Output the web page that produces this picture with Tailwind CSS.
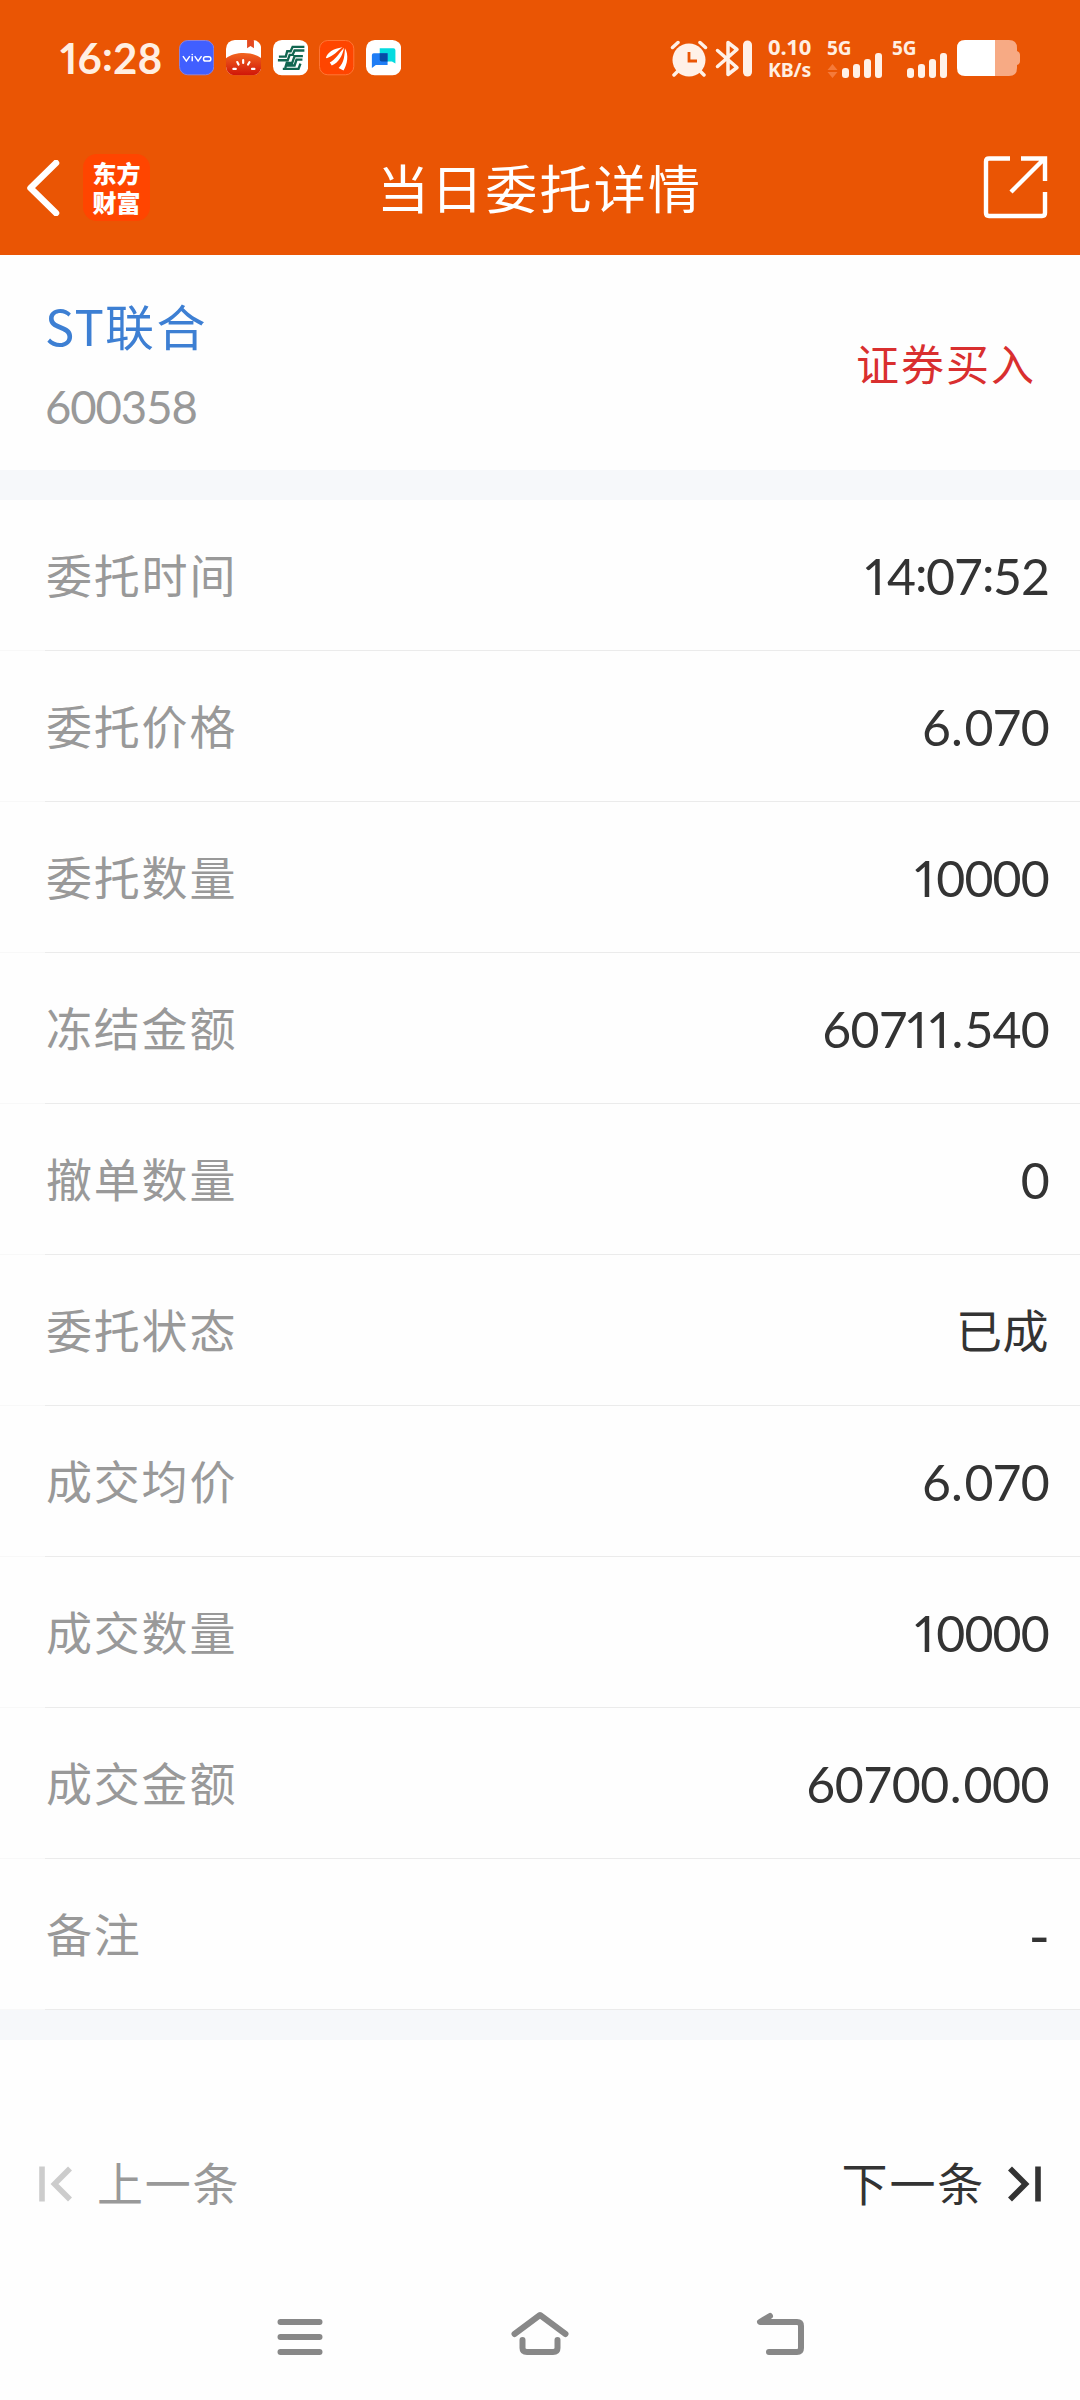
<!DOCTYPE html>
<html lang="zh-CN">
<head>
<meta charset="utf-8">
<title>当日委托详情</title>
<script src="https://cdn.jsdelivr.net/npm/@tailwindcss/browser@4"></script>
</head>
<body class="w-[1080px] h-[2400px] overflow-hidden bg-[#fefefe] flex flex-col font-['Lato','Noto_Sans_CJK_SC',sans-serif] text-[#333333]">
<header class="h-[255px] shrink-0 bg-[#ea5504] flex flex-col">
  <!-- status bar -->
  <div class="h-[116px] flex items-center justify-between pl-[60px] pr-[60px]">
    <div class="flex items-center text-[#ffefe2]">
      <span class="w-[119px] text-[42px] leading-[44px] font-bold tracking-[0.200px] tabular-nums whitespace-nowrap"><span class="proportional-nums">1</span>6<span class="relative -top-[3px]">:</span>28</span>
      <div class="flex gap-[11.5px]">
        <svg class="size-[35.3px]" viewBox="0 0 36 36"><rect x=".5" y=".5" width="35" height="35" rx="8.5" fill="#415fff" stroke="#8c83dc"/><g fill="none" stroke="#fff" stroke-width="1.5"><path d="M4 16.500l3.500 5 3.500-5M13.500 16.500v5.200M16 16.500l3.500 5 3.500-5"/><rect x="25" y="17" width="7.500" height="4.500" rx="2.200"/></g><circle cx="13.500" cy="14.800" r=".8" fill="#fff"/></svg>
        <svg class="size-[35.3px]" viewBox="0 0 36 36"><defs><clipPath id="tc"><rect width="36" height="36" rx="9"/></clipPath><linearGradient id="tg" x2="0" y2="1"><stop stop-color="#f2651f"/><stop offset="1" stop-color="#cf1408"/></linearGradient></defs><g clip-path="url(#tc)"><rect width="36" height="36" fill="#fff"/><path d="M21.500 0h7v8.500L25 6l-3.500 2.500z" fill="#e4491f"/><path d="M0 18.500C9 11.500 27 11.500 36 18.500v18H0z" fill="url(#tg)"/><g stroke="#fff" stroke-width="2.200" stroke-linecap="round"><path d="M17.500 20.500v3M11.500 22.500l1.300 2.500M24 22.500l-1.500 2.500M7.500 29.500h2.500M26.500 29.500h2.500"/></g></g></svg>
        <svg class="size-[35.3px]" viewBox="0 0 36 36"><rect width="36" height="36" rx="9" fill="#fff"/><g fill="none" stroke="#116650" stroke-width="2.400"><path d="M32 7H20l-2 4.500h-3.500L13 17H6M32 10.700H22l-2 4.500h-3l-2 5.500H5M30.500 16.500H22l-2.500 7H14l-1.500 5M30 20h-6l-2 6h-8M28 24l-2 5.500H10"/></g></svg>
        <svg class="size-[35.3px]" viewBox="0 0 36 36"><rect x=".5" y=".5" width="35" height="35" rx="8.500" fill="#ff4500" stroke="#ff7636"/><g fill="#fff"><path d="M7 18C9 13 14 9 24 7.500C18 11.500 16 16 8 18.500z"/><path d="M11 23C17 20 20 14 25.500 8C24 16 20 23.500 13 26z"/><path d="M20 28.500C26 23 26 15 26.500 8.500C30.500 15 29 25 25 31z"/></g></svg>
        <svg class="size-[35.3px]" viewBox="0 0 36 36"><rect width="36" height="36" rx="9" fill="#fff"/><path d="M14 8.500h14q2 0 2 2V24l-3.500-2H14z" fill="#05dbe0"/><path d="M8 13.500h14v12H10L6 28.500V15.500q0-2 2-2z" fill="#1f7df5"/><path d="M14 13.500h8V22h-6q-2 0-2-2z" fill="#064aa5"/></svg>
      </div>
    </div>
    <div class="flex items-center text-[#ffefe2]">
      <svg class="w-[38px] h-[37px]" viewBox="0 0 38 37"><circle cx="19" cy="20" r="16.500" fill="#fff1e8"/><path d="M19 12v9h8" fill="none" stroke="#ea5504" stroke-width="2.800"/><path d="M2.500 7.500l5.500-5M35.500 7.500L30 2.500M8 31l-4 4M30 31l4 4" stroke="#fff1e8" stroke-width="3.500" stroke-linecap="round"/></svg>
      <svg class="ml-[7px] w-[38px] h-[37px]" viewBox="0 0 38 37"><path d="M2.500 10.500L22 27.500l-9 7V2.500l9 7L2.500 26.500" fill="none" stroke="#fff1e8" stroke-width="3.500" stroke-linejoin="round" stroke-linecap="round"/><rect x="28" y=".5" width="9" height="36" rx="4.500" fill="#fff1e8"/></svg>
      <div class="ml-[15px] w-[49px] font-['Noto_Sans',sans-serif] font-bold leading-[23px] whitespace-nowrap flex flex-col"><span class="text-[22px] tracking-[-0.200px]">0.10</span><span class="text-[19.500px] tracking-[-0.200px]">KB/s</span></div>
      <div class="ml-[10px] w-[57px] h-[40px] flex flex-col justify-between font-['Noto_Sans',sans-serif] font-bold">
        <span class="text-[19px] leading-[20px] h-[12px]">5G</span>
        <svg class="w-[57px] h-[26px]" viewBox="0 0 57 26"><path d="M5.500 12l5 6H.5zM5.500 26l5-6H.5z" fill="#f57a3a"/><g fill="#fff1e8"><rect x="15" y="16" width="7" height="10" rx="3"/><rect x="26" y="12" width="7" height="14" rx="3"/><rect x="37" y="7" width="7" height="19" rx="3"/><rect x="48" y="1" width="7" height="25" rx="3"/></g></svg>
      </div>
      <div class="ml-[8px] w-[57px] h-[40px] flex flex-col justify-between font-['Noto_Sans',sans-serif] font-bold">
        <span class="text-[19px] leading-[20px] h-[12px]">5G</span>
        <svg class="w-[57px] h-[26px]" viewBox="0 0 57 26"><g fill="#fff1e8"><rect x="15" y="16" width="7" height="10" rx="3"/><rect x="26" y="12" width="7" height="14" rx="3"/><rect x="37" y="7" width="7" height="19" rx="3"/><rect x="48" y="1" width="7" height="25" rx="3"/></g></svg>
      </div>
      <svg class="ml-[8px] w-[63px] h-[36px]" viewBox="0 0 63 36"><path d="M38 0h14q8 0 8 8v3q3 1 3 4v6q0 3-3 4v3q0 8-8 8H38z" fill="#f7aa84"/><path d="M8 0h30v36H8q-8 0-8-8V8q0-8 8-8z" fill="#fff"/></svg>
    </div>
  </div>
  <!-- title bar -->
  <div class="h-[139px] grid grid-cols-[1fr_auto_1fr] items-center pl-[26px] pr-[31px]">
    <div class="flex items-center mt-[4px]">
      <svg class="w-[34px] h-[56px]" viewBox="0 0 34 56"><path d="M30 3L4.500 28 30 53" fill="none" stroke="#fff" stroke-width="6.500" stroke-linejoin="round" stroke-linecap="round"/></svg>
      <div class="ml-[23px] size-[67px] rounded-[14px] bg-[#ff4500] text-white font-black text-[24px] leading-[29px] font-['Noto_Sans_CJK_SC',sans-serif] flex flex-col items-center justify-center"><span class="-mt-[2px]">东方</span><span>财富</span></div>
    </div>
    <h1 class="mt-[3px] ml-[4px] text-white text-[52px] leading-[60px] tracking-[2.200px] font-['Noto_Sans_CJK_SC',sans-serif] whitespace-nowrap">当日委托详情</h1>
    <svg class="justify-self-end mt-[4px] w-[66px] h-[66px]" viewBox="0 0 66 66"><path d="M27 3.500H6q-3 0-3 3V58q0 3 3 3h53q3 0 3-3V37M38 3.500h24V26M61 4L28 37" fill="none" stroke="#fff" stroke-width="4.400"/></svg>
  </div>
</header>

<section class="h-[215px] shrink-0 flex justify-between pl-[45px] pr-[44px]">
  <div class="flex flex-col pt-[38px]">
    <span class="text-[49px] leading-[64px] tracking-[2.300px] text-[#3d7fd3] whitespace-nowrap font-['Noto_Sans_CJK_SC',sans-serif]"><span class="tracking-[1.300px]">ST</span>联合</span>
    <span class="mt-[20px] text-[45.500px] leading-[60px] tracking-[-1.100px] tabular-nums text-[#999999]">600358</span>
  </div>
  <span class="pt-[77px] text-[43px] leading-[60px] tracking-[2px] text-[#d92f2f] font-['Noto_Sans_CJK_SC',sans-serif] whitespace-nowrap">证券买入</span>
</section>
<div class="h-[30px] shrink-0 bg-[#f6f8fa]"></div>

<dl class="shrink-0 text-[46px] leading-[60px]">
  <div class="flex"><div class="w-[45px] border-b border-[#f8f8f8]"></div><div class="flex-1 h-[151px] border-b border-[#ebebeb] flex items-center justify-between pt-[2px] pl-px pr-[31px]"><dt class="text-[#999999] tracking-[1.800px]">委托时间</dt><dd class="text-[50px] tracking-[-1px] tabular-nums"><span class="proportional-nums tracking-[2px]">1</span>4<span class="relative -top-[3px] tracking-[-1.500px]">:</span>07<span class="relative -top-[3px] tracking-[-1.500px]">:</span>52</dd></div></div>
  <div class="flex"><div class="w-[45px] border-b border-[#f8f8f8]"></div><div class="flex-1 h-[151px] border-b border-[#ebebeb] flex items-center justify-between pt-[2px] pl-px pr-[31px]"><dt class="text-[#999999] tracking-[1.800px]">委托价格</dt><dd class="text-[50px] tracking-[-0.800px] tabular-nums">6<span class="ml-px tracking-[1.500px]">.</span>070</dd></div></div>
  <div class="flex"><div class="w-[45px] border-b border-[#f8f8f8]"></div><div class="flex-1 h-[151px] border-b border-[#ebebeb] flex items-center justify-between pt-[2px] pl-px pr-[31px]"><dt class="text-[#999999] tracking-[1.800px]">委托数量</dt><dd class="text-[50px] tracking-[-0.800px] tabular-nums"><span class="proportional-nums tracking-[2px]">1</span>0000</dd></div></div>
  <div class="flex"><div class="w-[45px] border-b border-[#f8f8f8]"></div><div class="flex-1 h-[151px] border-b border-[#ebebeb] flex items-center justify-between pt-[2px] pl-px pr-[31px]"><dt class="text-[#999999] tracking-[1.800px]">冻结金额</dt><dd class="text-[50px] tracking-[-0.800px] tabular-nums">607<span class="proportional-nums tracking-[2.500px]">11</span><span class="tracking-[1px]">.</span>540</dd></div></div>
  <div class="flex"><div class="w-[45px] border-b border-[#f8f8f8]"></div><div class="flex-1 h-[151px] border-b border-[#ebebeb] flex items-center justify-between pt-[2px] pl-px pr-[31px]"><dt class="text-[#999999] tracking-[1.800px]">撤单数量</dt><dd class="text-[50px] tracking-[-0.800px] tabular-nums">0</dd></div></div>
  <div class="flex"><div class="w-[45px] border-b border-[#f8f8f8]"></div><div class="flex-1 h-[151px] border-b border-[#ebebeb] flex items-center justify-between pt-[2px] pl-px pr-[31px]"><dt class="text-[#999999] tracking-[1.800px]">委托状态</dt><dd class="tracking-[0.500px]">已成</dd></div></div>
  <div class="flex"><div class="w-[45px] border-b border-[#f8f8f8]"></div><div class="flex-1 h-[151px] border-b border-[#ebebeb] flex items-center justify-between pt-[2px] pl-px pr-[31px]"><dt class="text-[#999999] tracking-[1.800px]">成交均价</dt><dd class="text-[50px] tracking-[-0.800px] tabular-nums">6<span class="ml-px tracking-[1.500px]">.</span>070</dd></div></div>
  <div class="flex"><div class="w-[45px] border-b border-[#f8f8f8]"></div><div class="flex-1 h-[151px] border-b border-[#ebebeb] flex items-center justify-between pt-[2px] pl-px pr-[31px]"><dt class="text-[#999999] tracking-[1.800px]">成交数量</dt><dd class="text-[50px] tracking-[-0.800px] tabular-nums"><span class="proportional-nums tracking-[2px]">1</span>0000</dd></div></div>
  <div class="flex"><div class="w-[45px] border-b border-[#f8f8f8]"></div><div class="flex-1 h-[151px] border-b border-[#ebebeb] flex items-center justify-between pt-[2px] pl-px pr-[31px]"><dt class="text-[#999999] tracking-[1.800px]">成交金额</dt><dd class="text-[50px] tracking-[-0.500px] tabular-nums">60700<span class="ml-px tracking-[2px]">.</span>000</dd></div></div>
  <div class="flex"><div class="w-[45px] border-b border-[#f8f8f8]"></div><div class="flex-1 h-[151px] border-b border-[#ebebeb] flex items-center justify-between pt-[2px] pl-px pr-[31px]"><dt class="text-[#999999] tracking-[1.800px]">备注</dt><dd class="text-[58px] tracking-[-1px]">-</dd></div></div>
</dl>
<div class="h-[30px] shrink-0 bg-[#f6f8fa]"></div>

<nav class="h-[230px] shrink-0 pt-[114px] pl-[39px] pr-[39px] flex items-start justify-between text-[46px] leading-[60px] tracking-[1.800px]">
  <div class="flex items-center text-[#999999]">
    <svg class="w-[34px] h-[36px]" viewBox="0 0 34 36"><path d="M3 .5v35M31 2.500L15.500 18 31 33.500" fill="none" stroke="#cccccc" stroke-width="5.600"/></svg>
    <span class="ml-[24px]">上一条</span>
  </div>
  <div class="flex items-center">
    <span>下一条</span>
    <svg class="ml-[22px] w-[34px] h-[36px]" viewBox="0 0 34 36"><path d="M31 .5v35M3 2.500L18.500 18 3 33.500" fill="none" stroke="#333333" stroke-width="5.600"/></svg>
  </div>
</nav>

<footer class="flex-1 grid grid-cols-3 items-center px-[180px] pt-[10px]">
  <svg class="justify-self-center w-[60px] h-[60px]" viewBox="0 0 60 60"><path d="M10.500 12h39M10.500 27h39M10.500 42h39" stroke="#888" stroke-width="6" stroke-linecap="round"/></svg>
  <svg class="justify-self-center w-[60px] h-[60px]" viewBox="0 0 60 60"><path d="M4.500 24L30 5l25.500 19M12.500 30v8q0 4 4.500 4h26q4.500 0 4.500-4V30" fill="none" stroke="#888" stroke-width="6" stroke-linecap="round" stroke-linejoin="round"/></svg>
  <svg class="justify-self-center w-[60px] h-[60px]" viewBox="0 0 60 60"><path d="M20 6L10 12h37q4 0 4 4v22q0 4-4 4H19" fill="none" stroke="#888" stroke-width="6" stroke-linecap="round" stroke-linejoin="round"/></svg>
</footer>
</body>
</html>
